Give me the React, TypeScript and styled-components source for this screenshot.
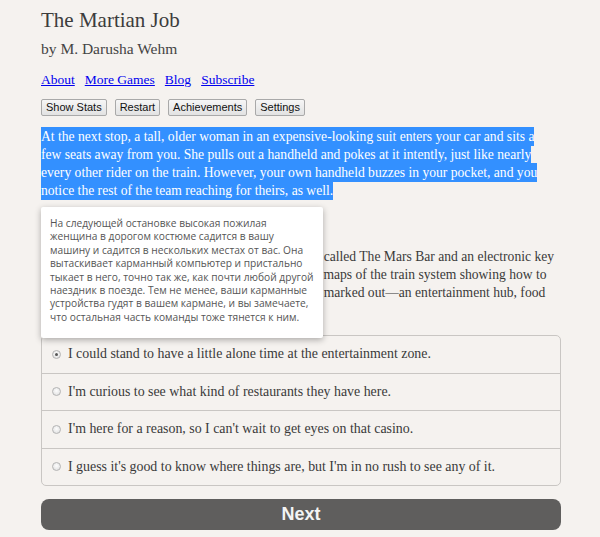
import React from "react";
import styled, { createGlobalStyle } from "styled-components";

const Global = createGlobalStyle`
  html, body { margin: 0; padding: 0; background: #f5f2ef; }
  body { font-family: "Liberation Serif", "Times New Roman", serif; color: #3a3a3a; }
`;

const Page = styled.div`
  position: relative;
  width: 520px;
  padding: 0 0 0 41px;
`;

const Title = styled.h1`
  margin: 0;
  padding-top: 8px;
  font-size: 21px;
  font-weight: normal;
  line-height: 24px;
  color: #3c3c3c;
`;

const Byline = styled.h2`
  margin: 8px 0 0;
  font-size: 15.5px;
  font-weight: normal;
  line-height: 18px;
  color: #444;
`;

const Links = styled.nav`
  display: flex;
  gap: 10px;
  margin-top: 14px;
  font-size: 13.5px;
  line-height: 16px;
`;

const Link = styled.a`
  color: #0000ee;
  text-decoration: underline;
`;

const Buttons = styled.div`
  display: flex;
  gap: 8px;
  margin-top: 11px;
`;

const Btn = styled.button`
  height: 17px;
  padding: 0 4px;
  font-family: "Liberation Sans", Arial, sans-serif;
  font-size: 11px;
  color: #111;
  background: linear-gradient(#f6f6f6, #e2e2e2);
  border: 1px solid #a9a9a9;
  border-radius: 2px;
  line-height: 15px;
`;

const Para = styled.p<{ $gap?: number }>`
  margin: ${(p) => p.$gap ?? 15}px 0 0;
  font-size: 13.6px;
  line-height: 18px;
  white-space: nowrap;
`;

const Selected = styled.span`
  background: #3390ff;
  color: #fff;
  padding: 2px 0;
`;

const Tip = styled.div`
  position: absolute;
  left: 41px;
  top: 207px;
  width: 282px;
  box-sizing: border-box;
  padding: 10px 9px 14px;
  background: #fff;
  box-shadow: 0 2px 6px rgba(0, 0, 0, 0.3);
  border-radius: 2px;
  font-family: "Open Sans", "Noto Sans", sans-serif;
  font-size: 10.2px;
  line-height: 13.4px;
  color: #555;
  white-space: nowrap;
`;

const Choices = styled.div`
  margin-top: 15px;
  border: 1px solid #c9c6c3;
  border-radius: 5px;
  display: flex;
  flex-direction: column;
`;

const Choice = styled.label<{ $first?: boolean }>`
  display: flex;
  align-items: center;
  height: 36.5px;
  padding-left: 10px;
  gap: 7px;
  font-size: 13.9px;
  border-top: ${(p) => (p.$first ? "none" : "1px solid #c9c6c3")};
`;

const Radio = styled.span<{ $on?: boolean }>`
  width: 9px;
  height: 9px;
  border-radius: 50%;
  border: 1px solid #b4b4b4;
  background: radial-gradient(circle at 50% 40%, #fdfdfd, #dcdcdc);
  display: flex;
  align-items: center;
  justify-content: center;
  box-sizing: border-box;
  flex: none;
  &::after {
    content: "";
    width: 3px;
    height: 3px;
    border-radius: 50%;
    background: ${(p) => (p.$on ? "#555" : "transparent")};
  }
`;

const Next = styled.button`
  display: block;
  width: 520px;
  height: 31px;
  margin-top: 13px;
  border: none;
  border-radius: 8px;
  background: #5f5e5d;
  color: #f4f4f4;
  font-family: "Liberation Sans", Arial, sans-serif;
  font-weight: bold;
  font-size: 18px;
`;

const choices = [
  "I could stand to have a little alone time at the entertainment zone.",
  "I'm curious to see what kind of restaurants they have here.",
  "I'm here for a reason, so I can't wait to get eyes on that casino.",
  "I guess it's good to know where things are, but I'm in no rush to see any of it.",
];

const intro = [
  "At the next stop, a tall, older woman in an expensive-looking suit enters your car and sits a ",
  "few seats away from you. She pulls out a handheld and pokes at it intently, just like nearly ",
  "every other rider on the train. However, your own handheld buzzes in your pocket, and you ",
  "notice the rest of the team reaching for theirs, as well.",
];

const details = [
  "It contains a reservation for a private seat at a place called The Mars Bar and an electronic key",
  "card for your hotel room, along with a set of digital maps of the train system showing how to",
  "get to each of the places that your team had already marked out—an entertainment hub, food",
  "court, shopping and a casino.",
];

const tip = [
  "На следующей остановке высокая пожилая",
  "женщина в дорогом костюме садится в вашу",
  "машину и садится в нескольких местах от вас. Она",
  "вытаскивает карманный компьютер и пристально",
  "тыкает в него, точно так же, как почти любой другой",
  "наездник в поезде. Тем не менее, ваши карманные",
  "устройства гудят в вашем кармане, и вы замечаете,",
  "что остальная часть команды тоже тянется к ним.",
];

const lines = (arr: string[]) =>
  arr.map((l, i) => (
    <React.Fragment key={i}>
      {l}
      {i < arr.length - 1 && <br />}
    </React.Fragment>
  ));

export default function App() {
  return (
    <>
      <Global />
      <Page>
        <Title>The Martian Job</Title>
        <Byline>by M. Darusha Wehm</Byline>
        <Links>
          <Link href="#">About</Link>
          <Link href="#">More Games</Link>
          <Link href="#">Blog</Link>
          <Link href="#">Subscribe</Link>
        </Links>
        <Buttons>
          <Btn>Show Stats</Btn>
          <Btn>Restart</Btn>
          <Btn>Achievements</Btn>
          <Btn>Settings</Btn>
        </Buttons>
        <Para $gap={12}>
          <Selected>{lines(intro)}</Selected>
        </Para>
        <Para>It's a message from the woman.</Para>
        <Para>{lines(details)}</Para>
        <Choices>
          {choices.map((c, i) => (
            <Choice key={i} $first={i === 0}>
              <Radio $on={i === 0} />
              {c}
            </Choice>
          ))}
        </Choices>
        <Next>Next</Next>
        <Tip>{lines(tip)}</Tip>
      </Page>
    </>
  );
}
